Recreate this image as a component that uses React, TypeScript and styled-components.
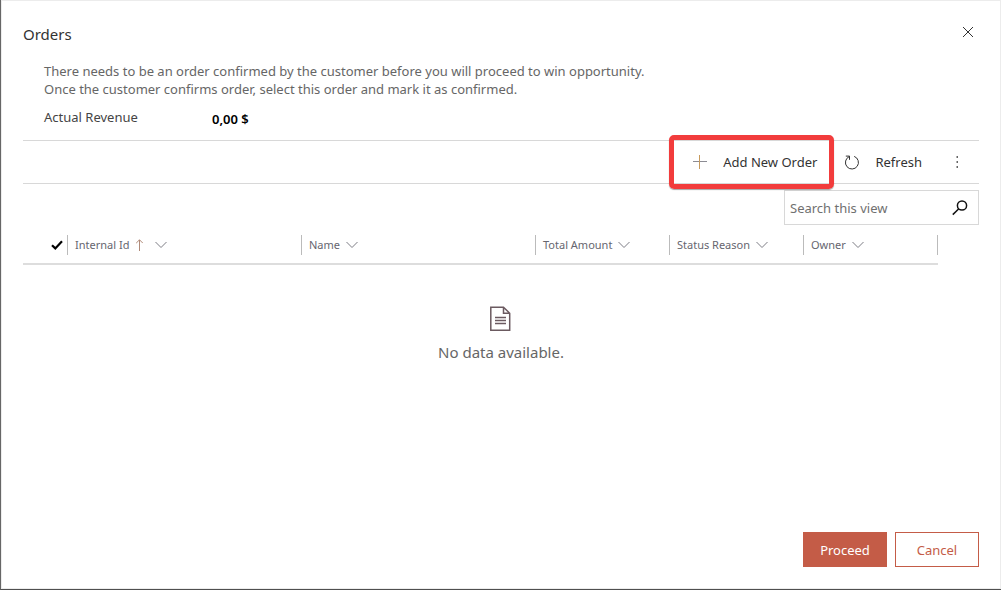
import React from "react";
import styled, { createGlobalStyle, css } from "styled-components";

const GlobalStyle = createGlobalStyle`
  *, *::before, *::after { box-sizing: border-box; }
  body {
    margin: 0;
    background: #ffffff;
    color: #333333;
    font-family: "Noto Sans", "Segoe UI", sans-serif;
    font-size: 13px;
    line-height: 18px;
  }
  button, input { font: inherit; color: inherit; }
`;

const Frame = styled.div`
  min-height: 100vh;
  display: flex;
  border-left: 1px solid #666666;
  border-bottom: 1px solid #4f4f4f;
`;

const Dialog = styled.section`
  flex: 1;
  min-width: 0;
  display: flex;
  flex-direction: column;
  padding: 20px 21px 21px;
  border: 1px solid #ececec;
`;

const Header = styled.header`
  display: flex;
  align-items: flex-start;
  justify-content: space-between;
  height: 26px;
`;

const Title = styled.h1`
  margin: 0;
  font-size: 15px;
  line-height: 26px;
  font-weight: 400;
  color: #333333;
`;

const CloseButton = styled.button`
  display: flex;
  padding: 4px;
  border: 0;
  background: none;
  color: #333333;
`;

const Summary = styled.div`
  padding: 15px 21px 0;
  color: #666666;
`;

const Message = styled.p`
  margin: 0;
`;

const Revenue = styled.dl`
  display: flex;
  margin: 10px 0 0;
  color: #444444;
`;

const RevenueLabel = styled.dt`
  width: 168px;
`;

const RevenueValue = styled.dd`
  margin: 0;
  padding-top: 2px;
  font-weight: 600;
  color: #000000;
`;

const CommandBar = styled.div`
  display: flex;
  justify-content: flex-end;
  height: 44px;
  margin-top: 12px;
  border-top: 1px solid #d8d8d8;
  border-bottom: 1px solid #d8d8d8;
`;

const Command = styled.button<{ $highlighted?: boolean; $iconOnly?: boolean }>`
  position: relative;
  display: flex;
  align-items: center;
  gap: 16px;
  padding: 0 ${({ $iconOnly }) => ($iconOnly ? 20 : 14)}px;
  border: 0;
  background: none;
  color: #333333;
  white-space: nowrap;

  ${({ $highlighted }) =>
    $highlighted &&
    css`
      &::after {
        content: "";
        position: absolute;
        inset: -6px -3px -6px -10px;
        border: 5px solid #f23c3c;
        border-radius: 5px;
        box-shadow: 0 1px 1px rgba(0, 0, 0, 0.35);
      }
    `}
`;

const SearchBox = styled.form`
  display: flex;
  align-items: center;
  align-self: flex-end;
  width: 195px;
  height: 35px;
  margin-top: 6px;
  padding: 0 10px 0 5px;
  border: 1px solid #d8d8d8;
`;

const SearchInput = styled.input`
  flex: 1;
  min-width: 0;
  padding: 0;
  border: 0;
  outline: 0;
  background: none;

  &::placeholder {
    color: #707070;
    opacity: 1;
  }
`;

const SearchButton = styled.button`
  display: flex;
  padding: 0;
  border: 0;
  background: none;
  color: #111111;
`;

const GridArea = styled.div`
  padding-right: 41px;
`;

const Grid = styled.table`
  width: 100%;
  table-layout: fixed;
  border-collapse: collapse;
`;

const GridHead = styled.th`
  height: 39px;
  padding: 2px 0 0;
  border-bottom: 2px solid #dddddd;
  font-size: 11px;
  font-weight: 400;
  text-align: left;
`;

const HeadCell = styled.div<{ $last?: boolean }>`
  display: flex;
  align-items: center;
  gap: 6px;
  height: 20px;
  padding-left: 7px;
  border-left: 1px solid #bbbbbb;
  border-right: ${({ $last }) => ($last ? "1px solid #bbbbbb" : "0")};
  color: #66666f;
  white-space: nowrap;
`;

const CheckCell = styled.div`
  display: flex;
  align-items: center;
  justify-content: flex-end;
  height: 20px;
  padding-right: 4px;
`;

const Sort = styled.span`
  display: flex;
  padding-right: 6px;
`;

const Empty = styled.div`
  display: flex;
  flex: 1;
  flex-direction: column;
  align-items: center;
  gap: 10px;
  padding-top: 41px;
  font-size: 15px;
  line-height: 22px;
  color: #666666;
`;

const Footer = styled.footer`
  display: flex;
  justify-content: flex-end;
  gap: 8px;
`;

const ActionButton = styled.button<{ $primary?: boolean }>`
  width: 84px;
  height: 35px;
  padding: 0;
  border: 1px solid #c45c47;
  background: ${({ $primary }) => ($primary ? "#c45c47" : "#ffffff")};
  color: ${({ $primary }) => ($primary ? "#ffffff" : "#c45c47")};
`;

const stroke = { fill: "none", stroke: "currentColor" } as const;

const CloseIcon = () => (
  <svg width="14" height="14" viewBox="0 0 14 14" {...stroke}>
    <path d="M2 2l10 10M12 2L2 12" />
  </svg>
);

const PlusIcon = () => (
  <svg width="14" height="14" viewBox="0 0 14 14" fill="none">
    <path d="M0 6.5h14" stroke="#8c8c94" />
    <path d="M6.5 0v14" stroke="#c79a5c" />
  </svg>
);

const RefreshIcon = () => (
  <svg width="14" height="15" viewBox="0 0 14 15" {...stroke}>
    <path d="M9.2 1.4A6.5 6.5 0 1 1 4.2 1.6M.8 1.1h3.7v3.7" />
  </svg>
);

const MoreIcon = () => (
  <svg width="3" height="14" viewBox="0 0 3 14" fill="#666666">
    <path d="M.5 1H2v2H.5zM.5 6H2v2H.5zM.5 11H2v2H.5z" />
  </svg>
);

const SearchIcon = () => (
  <svg width="16" height="16" viewBox="0 0 16 16" {...stroke} strokeWidth="1.5">
    <circle cx="10" cy="5.5" r="4.6" />
    <path d="M6.8 8.8L.8 14.6" />
  </svg>
);

const CheckIcon = () => (
  <svg width="12" height="10" viewBox="0 0 12 10" fill="none" stroke="#000000" strokeWidth="2.2">
    <path d="M1 5.2l3.3 3.2L11 1.2" />
  </svg>
);

const SortUpIcon = () => (
  <svg width="8" height="12" viewBox="0 0 8 12" fill="none" stroke="#b08a78">
    <path d="M4.5 12V1M1.2 4.1L4.5.8l3.3 3.3" />
  </svg>
);

const ChevronIcon = () => (
  <svg width="12" height="8" viewBox="0 0 12 8" fill="none" stroke="#7c7c84">
    <path d="M.5 1L6 6.5 11.5 1" />
  </svg>
);

const DocumentIcon = () => (
  <svg width="22" height="25" viewBox="0 0 22 25" fill="none" stroke="#6b5a60" strokeWidth="1.5">
    <path d="M.8 1.2h12.7l6.2 6v17H.8zM13.5 1.2v6h6.2" />
    <path d="M5 11.5h11M5 14.5h11M5 17.5h11" />
  </svg>
);

const columns = [
  { label: "Internal Id", width: 234, sorted: true },
  { label: "Name", width: 234 },
  { label: "Total Amount", width: 134 },
  { label: "Status Reason", width: 134 },
  { label: "Owner", width: 135 },
];

export default function App() {
  return (
    <>
      <GlobalStyle />
      <Frame>
        <Dialog role="dialog" aria-labelledby="dialog-title">
          <Header>
            <Title id="dialog-title">Orders</Title>
            <CloseButton type="button" aria-label="Close">
              <CloseIcon />
            </CloseButton>
          </Header>
          <Summary>
            <Message>
              There needs to be an order confirmed by the customer before you will proceed to win opportunity.
              <br />
              Once the customer confirms order, select this order and mark it as confirmed.
            </Message>
            <Revenue>
              <RevenueLabel>Actual Revenue</RevenueLabel>
              <RevenueValue>0,00 $</RevenueValue>
            </Revenue>
          </Summary>
          <CommandBar>
            <Command type="button" $highlighted>
              <PlusIcon />
              Add New Order
            </Command>
            <Command type="button">
              <RefreshIcon />
              Refresh
            </Command>
            <Command type="button" $iconOnly aria-label="More commands">
              <MoreIcon />
            </Command>
          </CommandBar>
          <SearchBox role="search">
            <SearchInput type="text" aria-label="Search this view" placeholder="Search this view" />
            <SearchButton type="button" aria-label="Start search">
              <SearchIcon />
            </SearchButton>
          </SearchBox>
          <GridArea>
            <Grid>
              <colgroup>
                <col style={{ width: 44 }} />
                {columns.map((c) => (
                  <col key={c.label} style={{ width: `${(c.width / 915) * 100}%` }} />
                ))}
              </colgroup>
              <thead>
                <tr>
                  <GridHead scope="col" aria-label="Selected">
                    <CheckCell>
                      <CheckIcon />
                    </CheckCell>
                  </GridHead>
                  {columns.map((c, i) => (
                    <GridHead key={c.label} scope="col">
                      <HeadCell $last={i === columns.length - 1}>
                        {c.label}
                        {c.sorted && (
                          <Sort>
                            <SortUpIcon />
                          </Sort>
                        )}
                        <ChevronIcon />
                      </HeadCell>
                    </GridHead>
                  ))}
                </tr>
              </thead>
            </Grid>
          </GridArea>
          <Empty>
            <DocumentIcon />
            No data available.
          </Empty>
          <Footer>
            <ActionButton type="button" $primary>
              Proceed
            </ActionButton>
            <ActionButton type="button">Cancel</ActionButton>
          </Footer>
        </Dialog>
      </Frame>
    </>
  );
}
